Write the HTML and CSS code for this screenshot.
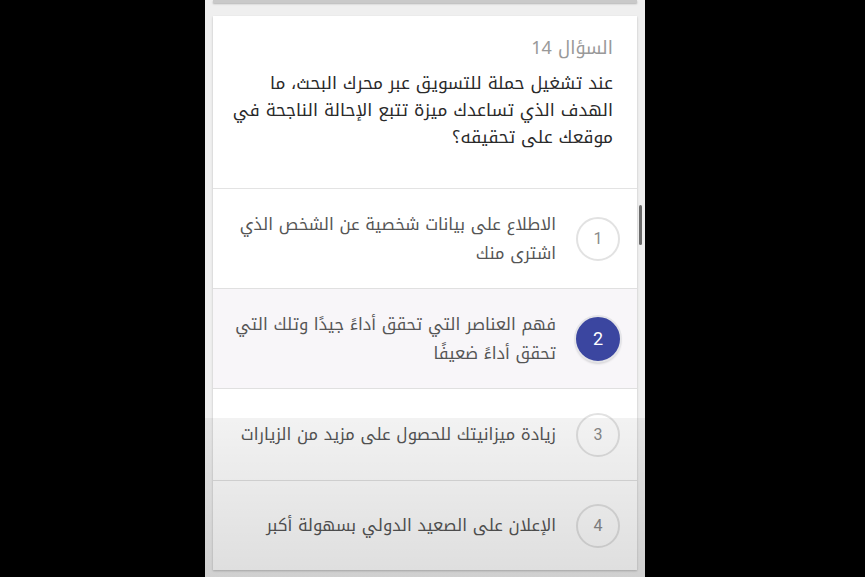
FILE: index.html
```html
<!DOCTYPE html>
<html lang="ar">
<head>
    <meta charset="UTF-8">
    <title>السؤال 14</title>
    <link rel="stylesheet" href="styles.css">
</head>
<body>
    <div class="screen">
        <!-- بقايا البطاقة السابقة -->
        <div class="prev-card"></div>

        <div class="card" dir="rtl">
            <div class="question">
                <div class="q-title">السؤال 14</div>
                <div class="q-text">عند تشغيل حملة للتسويق عبر محرك البحث، ما الهدف الذي تساعدك ميزة تتبع الإحالة الناجحة في موقعك على تحقيقه؟</div>
            </div>

            <div class="option">
                <span class="num">1</span>
                <span class="opt-text">الاطلاع على بيانات شخصية عن الشخص الذي اشترى منك</span>
            </div>
            <div class="option selected">
                <span class="num">2</span>
                <span class="opt-text">فهم العناصر التي تحقق أداءً جيدًا وتلك التي تحقق أداءً ضعيفًا</span>
            </div>
            <div class="option">
                <span class="num">3</span>
                <span class="opt-text">زيادة ميزانيتك للحصول على مزيد من الزيارات</span>
            </div>
            <div class="option last">
                <span class="num">4</span>
                <span class="opt-text">الإعلان على الصعيد الدولي بسهولة أكبر</span>
            </div>
        </div>

        <div class="scrollbar"></div>
        <div class="fade"></div>
    </div>
</body>
</html>
```

FILE: styles.css
```css
* { margin: 0; padding: 0; box-sizing: border-box; }

body {
    background: #000;
    height: 100vh;
    overflow: hidden;
    font-family: "Noto Kufi Arabic", "Noto Sans Arabic", "DejaVu Sans", sans-serif;
}

/* العمود الأوسط */
.screen {
    position: relative;
    margin-left: 205px;
    width: 440px;
    height: 577px;
    background: #efefef;
    overflow: hidden;
}

.prev-card {
    height: 3px;
    margin: 0 8px;
    background: #c9c9c9;
    box-shadow: 0 1px 2px rgba(0, 0, 0, 0.25);
}

.card {
    margin: 13px 8px 0;
    background: #fff;
    box-shadow: 0 1px 2px rgba(0, 0, 0, 0.22);
}

/* السؤال */
.question {
    padding: 19px 24px 37px 8px;
    border-bottom: 1px solid #e3e3e3;
}

.q-title {
    color: #999;
    font-size: 18px;
    line-height: 26px;
    margin-bottom: 9px;
}

.q-text {
    color: #2a2a2a;
    font-size: 17.4px;
    line-height: 27px;
}

/* الخيارات */
.option {
    display: flex;
    align-items: center;
    gap: 20px;
    min-height: 100px;
    padding: 20px 17px 20px 16px;
    border-bottom: 1px solid #e0e0e0;
}

.option.selected { background: #f8f6f9; }
.option:nth-child(4) { min-height: 92px; }
.option.last { min-height: 89px; border-bottom: none; }

.num {
    flex: none;
    width: 44px;
    height: 44px;
    border-radius: 50%;
    border: 2px solid #e2e2e2;
    display: flex;
    align-items: center;
    justify-content: center;
    color: #8a8a8a;
    font-family: Roboto, "Liberation Sans", sans-serif;
    font-size: 16px;
}

.selected .num {
    background: #3b46a0;
    border-color: #3b46a0;
    color: #fff;
    font-size: 18px;
    box-shadow: 0 0 0 2px #e4e4e8, 0 2px 3px rgba(0, 0, 0, 0.3);
}

.opt-text {
    color: #555;
    font-size: 16.6px;
    line-height: 29px;
}

.scrollbar {
    position: absolute;
    left: 434px;
    top: 205px;
    width: 3px;
    height: 40px;
    border-radius: 2px;
    background: #6a6a6a;
}

/* تظليل الجزء السفلي */
.fade {
    position: absolute;
    left: 0;
    right: 0;
    top: 418px;
    bottom: 0;
    pointer-events: none;
    background: linear-gradient(rgba(0, 0, 0, 0.05), rgba(0, 0, 0, 0.13));
}
```
